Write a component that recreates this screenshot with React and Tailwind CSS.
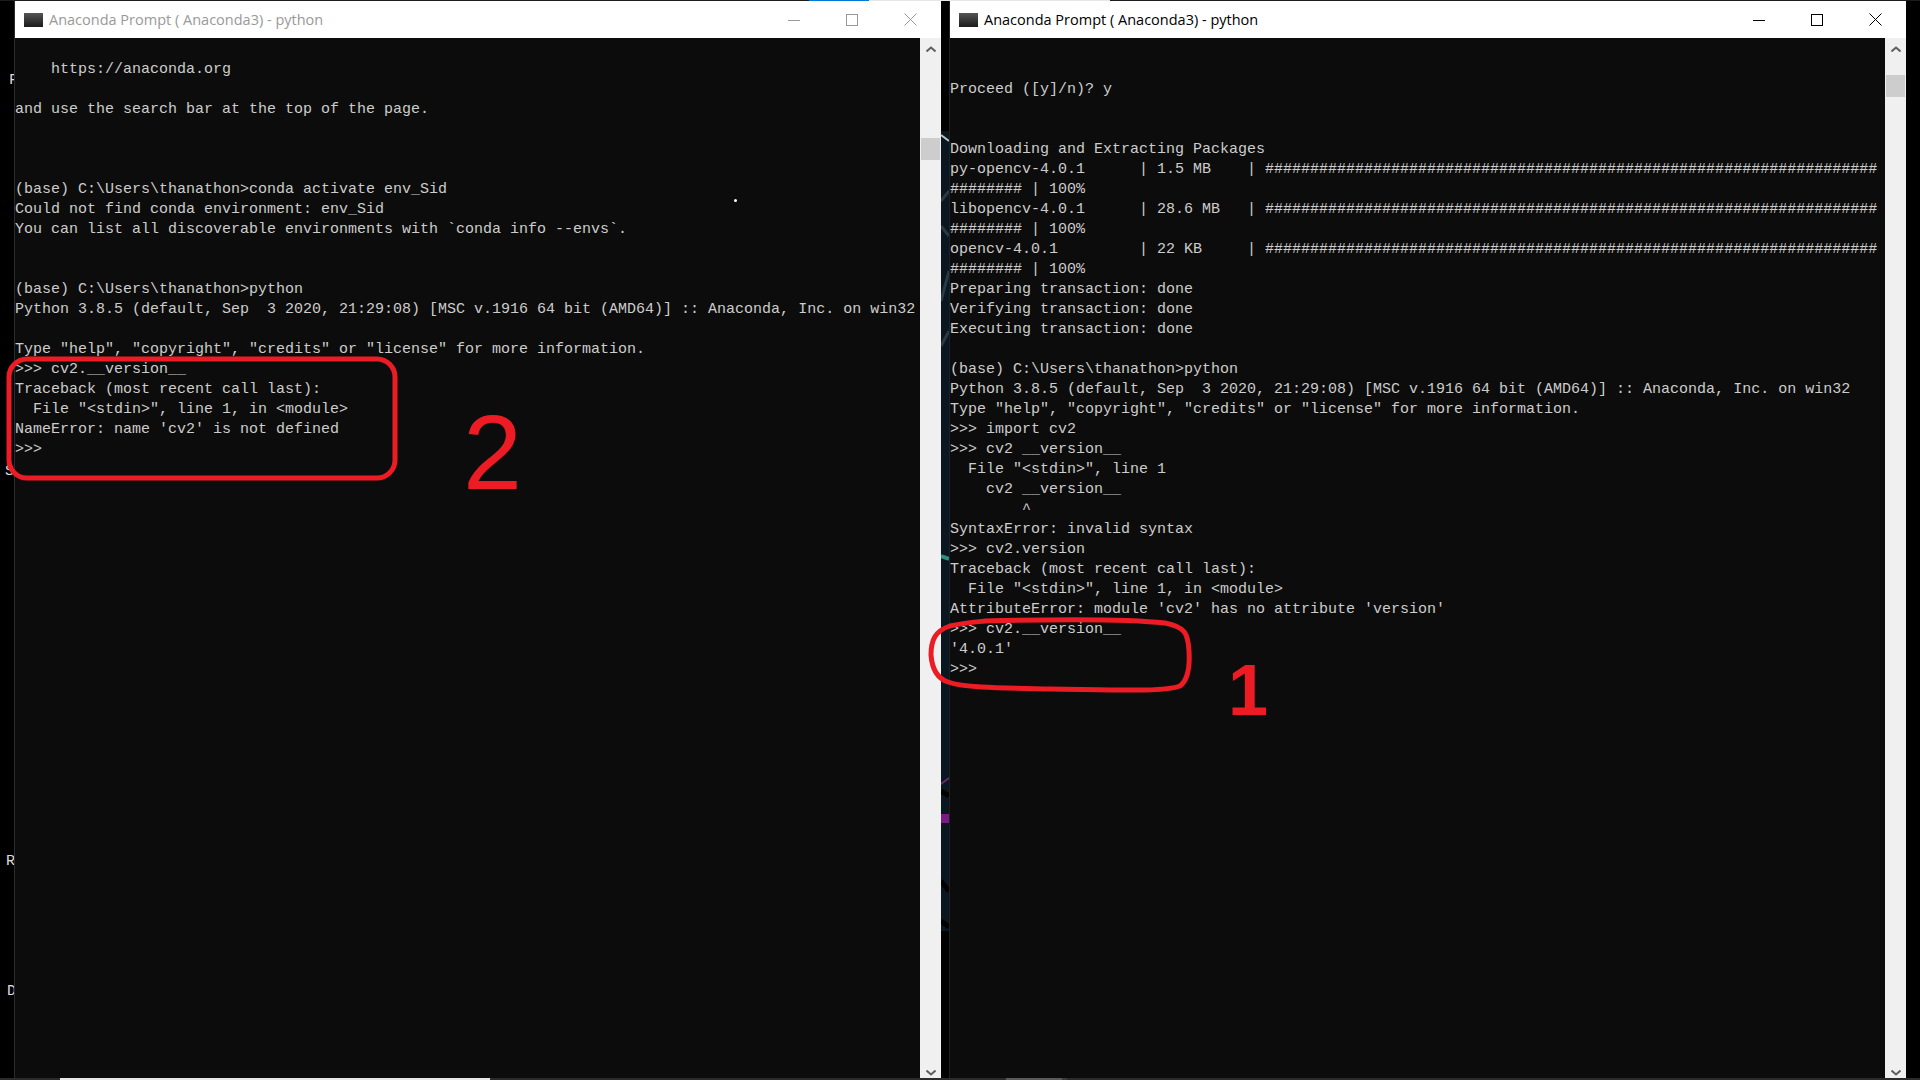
const leftText = `
    https://anaconda.org

and use the search bar at the top of the page.



(base) C:\\Users\\thanathon>conda activate env_Sid
Could not find conda environment: env_Sid
You can list all discoverable environments with \`conda info --envs\`.


(base) C:\\Users\\thanathon>python
Python 3.8.5 (default, Sep  3 2020, 21:29:08) [MSC v.1916 64 bit (AMD64)] :: Anaconda, Inc. on win32

Type "help", "copyright", "credits" or "license" for more information.
>>> cv2.__version__
Traceback (most recent call last):
  File "<stdin>", line 1, in <module>
NameError: name 'cv2' is not defined
>>>`;

const hashes = "#".repeat(68);

const rightText = `

Proceed ([y]/n)? y


Downloading and Extracting Packages
py-opencv-4.0.1      | 1.5 MB    | ${hashes}
######## | 100%
libopencv-4.0.1      | 28.6 MB   | ${hashes}
######## | 100%
opencv-4.0.1         | 22 KB     | ${hashes}
######## | 100%
Preparing transaction: done
Verifying transaction: done
Executing transaction: done

(base) C:\\Users\\thanathon>python
Python 3.8.5 (default, Sep  3 2020, 21:29:08) [MSC v.1916 64 bit (AMD64)] :: Anaconda, Inc. on win32
Type "help", "copyright", "credits" or "license" for more information.
>>> import cv2
>>> cv2 __version__
  File "<stdin>", line 1
    cv2 __version__
        ^
SyntaxError: invalid syntax
>>> cv2.version
Traceback (most recent call last):
  File "<stdin>", line 1, in <module>
AttributeError: module 'cv2' has no attribute 'version'
>>> cv2.__version__
'4.0.1'
>>>`;

const WindowControls = ({ color }) => (
    <div className="flex h-full items-center pr-px">
        <div className="flex w-[58px] justify-center">
            <svg width="12" height="12" viewBox="0 0 12 12"><path d="M0 6.5H12" stroke={color} /></svg>
        </div>
        <div className="flex w-[58px] justify-center">
            <svg width="12" height="12" viewBox="0 0 12 12"><rect x="0.5" y="0.5" width="11" height="11" fill="none" stroke={color} /></svg>
        </div>
        <div className="flex w-[59px] justify-center">
            <svg width="13" height="13" viewBox="0 0 13 13"><path d="M0.5 0.5L12.5 12.5M12.5 0.5L0.5 12.5" stroke={color} /></svg>
        </div>
    </div>
);

const Chevron = ({ down }) => (
    <svg width="10" height="6" viewBox="0 0 10 6" className="shrink-0">
        <path d={down ? "M0.5 0.5L5 4.5L9.5 0.5" : "M0.5 5.5L5 1.5L9.5 5.5"} fill="none" stroke="#606060" strokeWidth="2" />
    </svg>
);

const Scrollbar = ({ thumbTop }) => (
    <div className="flex h-full w-[21px] shrink-0 flex-col items-center bg-[#f0f0f0] pt-[8px] pb-[2px]">
        <Chevron />
        <div className={`h-[22px] w-[19px] bg-[#cdcdcd] ${thumbTop}`}></div>
        <div className="flex-1"></div>
        <Chevron down />
    </div>
);

const TerminalWindow = ({ title, text, titleColor, controlColor, thumbTop, className }) => (
    <div className={`flex h-full flex-col ${className}`}>
        <div className="flex h-[37px] shrink-0 items-center justify-between bg-white pl-[9px]">
            <div className="flex items-center gap-[6px]">
                <div className="h-[14px] w-[19px] bg-gradient-to-b from-[#555555] to-[#1c1c1c]"></div>
                <span className={`font-['Open_Sans',sans-serif] text-[14.5px] ${titleColor}`}>{title}</span>
            </div>
            <WindowControls color={controlColor} />
        </div>
        <div className="flex min-h-0 flex-1">
            <pre className="min-w-0 flex-1 overflow-hidden bg-[#0c0c0c] pt-[2px] font-['Liberation_Mono',monospace] text-[15px] leading-[20px] text-[#cccccc]">{text}</pre>
            <Scrollbar thumbTop={thumbTop} />
        </div>
    </div>
);

// bits of the desktop showing between the two windows
const Wallpaper = () => (
    <svg width="8" height="1077" viewBox="0 0 8 1077" className="block">
        <rect width="8" height="1077" fill="#000000" />
        <rect y="130" width="8" height="800" fill="#0a1620" />
        <path d="M0 134L8 140" stroke="#b9c4c4" strokeWidth="2" />
        <path d="M0 200L8 190M0 225L8 235M0 300L8 270M0 345L8 330" stroke="#2a3a44" strokeWidth="3" />
        <path d="M0 555L8 558" stroke="#2f8f7c" strokeWidth="4" />
        <path d="M0 783L8 777" stroke="#6a2a6a" strokeWidth="2" />
        <rect y="813" width="8" height="9" fill="#7c1a84" />
        <path d="M0 880L8 890M0 920L8 926M0 790L8 795" stroke="#000000" strokeWidth="5" />
        <rect y="930" width="8" height="147" fill="#000000" />
    </svg>
);

const StrayLetter = ({ className, children }) => (
    <span className={`absolute font-['Liberation_Mono',monospace] text-[15px] leading-[20px] text-[#dddddd] ${className}`}>{children}</span>
);

export default function App() {
    return (
        <div className="relative flex h-[1080px] w-[1920px] flex-col overflow-hidden bg-black">
            <div className="flex h-px shrink-0 bg-[#1c1c1c]">
                <div className="w-[809px]"></div>
                <div className="w-[60px] bg-[#0078d7]"></div>
                <div className="w-[241px] bg-[#e6e6e6]"></div>
            </div>
            <div className="flex min-h-0 flex-1">
                <div className="relative h-full w-[15px] shrink-0 overflow-hidden border-r border-[#2c2c2c]">
                    <StrayLetter className="top-[70px] left-[9px]">F</StrayLetter>
                    <StrayLetter className="top-[461px] left-[5px]">S</StrayLetter>
                    <StrayLetter className="top-[851px] left-[6px]">R</StrayLetter>
                    <StrayLetter className="top-[981px] left-[7px]">D</StrayLetter>
                </div>
                <TerminalWindow
                    className="w-[926px] shrink-0"
                    title="Anaconda Prompt ( Anaconda3) - python"
                    titleColor="text-[#999999]"
                    controlColor="#999999"
                    text={leftText}
                    thumbTop="mt-[86px]"
                />
                <div className="h-full w-[8px] shrink-0"><Wallpaper /></div>
                <div className="h-full w-px shrink-0 bg-[#1f1f1f]"></div>
                <TerminalWindow
                    className="w-[956px] shrink-0"
                    title="Anaconda Prompt ( Anaconda3) - python"
                    titleColor="text-black"
                    controlColor="#000000"
                    text={rightText}
                    thumbTop="mt-[23px]"
                />
            </div>
            <div className="flex h-[2px] shrink-0 bg-[#2b2b2b]">
                <div className="ml-[60px] w-[430px] bg-[#e8e8e8]"></div>
                <div className="ml-[516px] w-[56px] bg-[#5a5a5a]"></div>
                <div className="w-[5px] bg-[#3c3c3c]"></div>
            </div>

            <div className="absolute top-[199px] left-[734px] h-[3px] w-[3px] rounded-full bg-white"></div>

            <svg width="1920" height="1080" viewBox="0 0 1920 1080" className="pointer-events-none absolute top-0 left-0">
                <rect x="9" y="359" width="386" height="119" rx="18" fill="none" stroke="#ed1c24" strokeWidth="5" />
                <path
                    d="M985 621C1060 619 1130 619 1165 623C1185 627 1188 633 1189 651C1190 668 1188 680 1180 686C1165 692 1120 690 1050 689C1000 688 965 688 948 682C936 678 932 668 931 655C931 640 935 631 950 626C962 623 975 622 985 621Z"
                    fill="none"
                    stroke="#ed1c24"
                    strokeWidth="5"
                />
            </svg>
            <span className="absolute top-[392px] left-[463px] font-['Liberation_Sans',sans-serif] text-[106px] leading-[120px] text-[#ed1c24]">2</span>
            <span className="absolute top-[650px] left-[1228px] font-['Liberation_Sans',sans-serif] text-[72px] leading-[80px] font-bold text-[#ed1c24]">1</span>
        </div>
    );
}
